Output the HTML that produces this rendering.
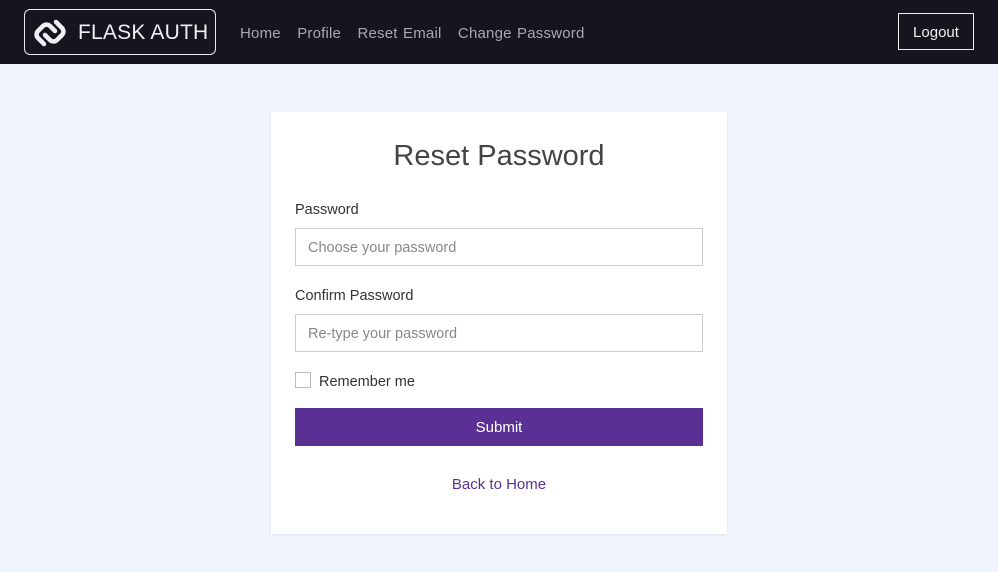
<!DOCTYPE html>
<html><head><meta charset="utf-8"><style>
*{box-sizing:border-box;margin:0;padding:0}
body{width:998px;height:572px;background:#f0f4fd;font-family:"Liberation Sans",sans-serif;overflow:hidden;position:relative}
nav{position:absolute;left:0;top:0;width:998px;height:64px;background:#16141f}
.brand{position:absolute;left:24px;top:9px;width:192px;height:46px;border:1px solid #e8e8ee;border-radius:6px;color:#f0f0f4;font-size:21px;white-space:nowrap}
.brand span{position:absolute;left:53px;top:11px;letter-spacing:0.2px}
.brand svg{position:absolute;left:7px;top:6px}
.links{position:absolute;top:25px;left:240px;font-size:15px;color:#a9a8b0;white-space:nowrap;letter-spacing:0.2px;word-spacing:1px}
.links a{margin-right:11px}
.logout{position:absolute;left:898px;top:13px;width:76px;height:37px;border:1px solid #f0f0f0;color:#f0f0f0;font-size:15px;text-align:center;line-height:38px}
.card{position:absolute;left:271px;top:112px;width:456px;height:422px;background:#fff;box-shadow:0 1px 3px rgba(0,0,0,.08)}
h1{position:absolute;top:28px;width:100%;text-align:center;font-weight:normal;font-size:29px;color:#444}
.lbl{position:absolute;left:24px;font-size:14.5px;color:#333}
.inp{position:absolute;left:24px;width:408px;height:38px;border:1px solid #ccc;font-size:14.5px;color:#888;padding:11px 12px}
.cb{position:absolute;left:24px;top:260px;width:16px;height:16px;border:1px solid #bbb}
.btn{position:absolute;left:24px;top:296px;width:408px;height:38px;background:#5a3095;color:#fff;text-align:center;line-height:40px;font-size:15px}
.back{position:absolute;top:364px;width:100%;text-align:center;color:#5a3095;font-size:15px}
</style></head><body>
<nav>
<div class="brand"><svg width="36" height="34" viewBox="0 0 36 34" fill="none" stroke="#f0f0f4" stroke-width="4.5" stroke-linecap="round"><path d="M12 28 L6 22 A5 5 0 0 1 6 15 L11 10 A5 5 0 0 1 18 10 L23 15"/><path d="M24 6 L30 12 A5 5 0 0 1 30 19 L25 24 A5 5 0 0 1 18 24 L13 19"/></svg><span>FLASK AUTH</span></div>
<div class="links"><a>Home</a> <a>Profile</a> <a>Reset Email</a> <a>Change Password</a></div>
<div class="logout">Logout</div>
</nav>
<div class="card">
<h1>Reset Password</h1>
<div class="lbl" style="top:90px">Password</div>
<div class="inp" style="top:116px">Choose your password</div>
<div class="lbl" style="top:176px">Confirm Password</div>
<div class="inp" style="top:202px">Re-type your password</div>
<div class="cb"></div><div class="lbl" style="left:48px;top:262px">Remember me</div>
<div class="btn">Submit</div>
<div class="back">Back to Home</div>
</div>
</body></html>
